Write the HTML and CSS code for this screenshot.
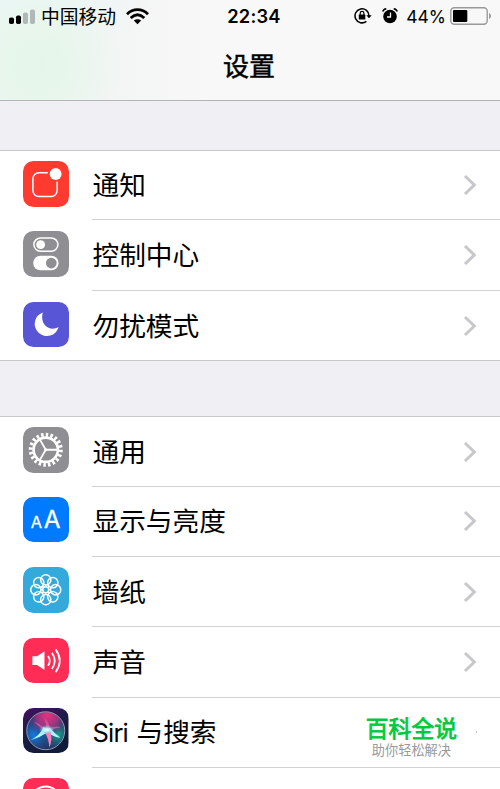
FILE: index.html
```html
<!DOCTYPE html>
<html lang="zh-CN">
<head>
<meta charset="utf-8">
<title>设置</title>
<link rel="stylesheet" href="styles.css">
</head>
<body>
<svg class="defs" width="0" height="0" aria-hidden="true">
  <symbol id="chevron" viewBox="0 0 14 22"><path d="M2 2l9.300 9-9.300 9" fill="none" stroke="#c7c7cc" stroke-width="3"/></symbol>
</svg>
<header class="top">
  <div class="status">
    <div class="carrier">
      <svg class="signal" width="27" height="17" viewBox="0 0 27 17"><rect x="0" y="10" width="5" height="6.500" rx="1.800"/><rect x="7" y="8" width="5" height="8.500" rx="1.800"/><g fill="#b0b9b7"><rect x="14" y="5" width="5" height="11.500" rx="1.800"/><rect x="21" y="2" width="5" height="14.500" rx="1.800"/></g></svg>
      <span>中国移动</span>
      <svg class="wifi" width="23" height="17" viewBox="0 0 23 17"><g fill="none" stroke="#000" stroke-width="2.800"><path d="M1 6.200C7 .2 16 .2 22 6.200"/><path d="M4.700 10C9 6 14 6 18.300 10"/></g><path d="M7.800 12.600Q11.500 9.800 15.200 12.600L11.500 16.300Z"/></svg>
    </div>
    <div class="clock">22:34</div>
    <div class="indicators">
      <svg class="lock" width="18" height="18" viewBox="0 0 18 18"><path d="M12.400 14.300A7 7 0 1 1 15 9" fill="none" stroke="#000" stroke-width="1.500"/><path d="M12.300 8.200h5.400L15 11.300z"/><rect x="4.800" y="7.600" width="6.500" height="5" rx=".6"/><path d="M6.200 8V6.200a1.850 1.850 0 0 1 3.700 0V8" fill="none" stroke="#000" stroke-width="1.200"/></svg>
      <svg class="alarm" width="16" height="18" viewBox="0 0 16 18"><circle cx="8" cy="9.500" r="6.800"/><path d="M.8 4.500Q1.500 2 4.300 1.700M15.200 4.500Q14.500 2 11.700 1.700" fill="none" stroke="#000" stroke-width="1.500"/><path d="M8.500 5.500v4.500H5" fill="none" stroke="#f7f7f7" stroke-width="1.300"/></svg>
      <span class="percent">44%</span>
      <svg class="battery" width="42" height="18" viewBox="0 0 42 18"><rect x=".8" y=".8" width="36.400" height="16.400" rx="3.500" fill="none" stroke="#999" stroke-width="1.400"/><rect x="3" y="3" width="14.300" height="12" rx="1"/><path d="M39 6q2 1 2 3t-2 3z" fill="#999"/></svg>
    </div>
  </div>
  <h1>设置</h1>
</header>
<main>
  <section class="group">
    <div class="row">
      <svg class="icon red" viewBox="0 0 46 46"><path d="M25 11.800H16a6 6 0 0 0-6 6v12a6 6 0 0 0 6 6h12.500a6 6 0 0 0 6-6V21" fill="none" stroke="#fff" stroke-width="1.500"/><circle cx="33" cy="13.200" r="6" fill="#fff"/></svg>
      <div class="cell"><span>通知</span><svg class="chevron"><use href="#chevron"/></svg></div>
    </div>
    <div class="row">
      <svg class="icon gray" viewBox="0 0 46 46"><rect x="11" y="7" width="24.300" height="13.500" rx="6.750" fill="none" stroke="#fff" stroke-width="1.500"/><circle cx="17.800" cy="13.800" r="4.500" fill="#fff"/><rect x="10.300" y="25" width="25.700" height="14.800" rx="7.400" fill="#fff"/><circle cx="28.600" cy="32.400" r="5.400" fill="#8e8e93"/></svg>
      <div class="cell"><span>控制中心</span><svg class="chevron"><use href="#chevron"/></svg></div>
    </div>
    <div class="row">
      <svg class="icon indigo" viewBox="0 0 46 46"><path d="M20 10.500A12.300 12.300 0 1 0 36 25.300C27.500 30.500 16.500 23 20 10.500Z" fill="#fff"/></svg>
      <div class="cell"><span>勿扰模式</span><svg class="chevron"><use href="#chevron"/></svg></div>
    </div>
  </section>
  <section class="group">
    <div class="row">
      <svg class="icon gray" viewBox="0 0 46 46"><g fill="none" stroke="#fff"><circle cx="23" cy="23" r="12.300" stroke-width="2.700"/><circle cx="23" cy="23" r="15.200" stroke-width="4" pathLength="40" stroke-dasharray="1.050 .95"/><path d="M23 23h12M23 23l-6.200-10.700M23 23l-6.200 10.700" stroke-width="1.800"/></g><circle cx="23" cy="23" r="1.600" fill="#fff"/></svg>
      <div class="cell"><span>通用</span><svg class="chevron"><use href="#chevron"/></svg></div>
    </div>
    <div class="row">
      <svg class="icon blue" viewBox="0 0 46 46"><g fill="#fff" stroke="#fff" stroke-width=".3" font-family="Inter, sans-serif"><text x="7.800" y="31" font-size="16.500">A</text><text x="20.900" y="31.700" font-size="24.500">A</text></g></svg>
      <div class="cell"><span>显示与亮度</span><svg class="chevron"><use href="#chevron"/></svg></div>
    </div>
    <div class="row">
      <svg class="icon cyan" viewBox="0 0 46 46"><g fill="none" stroke="#fff" stroke-width="1.500"><circle cx="23" cy="13" r="5.200"/><circle cx="30.100" cy="15.900" r="5.200"/><circle cx="33" cy="23" r="5.200"/><circle cx="30.100" cy="30.100" r="5.200"/><circle cx="23" cy="33" r="5.200"/><circle cx="15.900" cy="30.100" r="5.200"/><circle cx="13" cy="23" r="5.200"/><circle cx="15.900" cy="15.900" r="5.200"/><circle cx="23" cy="23" r="3"/><path d="M23 18v2M23 26v2M18 23h2M26 23h2M19.500 19.500l1.400 1.400M26.500 19.500l-1.400 1.400M19.500 26.500l1.400-1.400M26.500 26.500l-1.400-1.400"/></g></svg>
      <div class="cell"><span>墙纸</span><svg class="chevron"><use href="#chevron"/></svg></div>
    </div>
    <div class="row">
      <svg class="icon pink" viewBox="0 0 46 46"><path d="M9.500 18.500h4.700l7.500-5v18.800l-7.500-5H9.500z" fill="#fff"/><g fill="none" stroke="#fff" stroke-width="1.800"><path d="M25.300 18.200Q28.800 23 25.300 28"/><path d="M29.200 14.800Q35 23 29.200 31.300"/><path d="M33 11.500Q41.300 23 33 34.500"/></g></svg>
      <div class="cell"><span>声音</span><svg class="chevron"><use href="#chevron"/></svg></div>
    </div>
    <div class="row">
      <svg class="icon siri" viewBox="0 0 46 46">
        <defs>
          <linearGradient id="night" x2=".4" y2="1"><stop stop-color="#470f5e"/><stop offset=".5" stop-color="#1c1c48"/><stop offset="1" stop-color="#101b35"/></linearGradient>
          <radialGradient id="rose" cx=".55" cy=".1" r=".55"><stop stop-color="#e6317d"/><stop offset=".5" stop-color="#b33482" stop-opacity=".85"/><stop offset="1" stop-color="#703082" stop-opacity="0"/></radialGradient>
          <radialGradient id="azure" cx=".18" cy=".62" r=".5"><stop stop-color="#127de0"/><stop offset="1" stop-color="#1667ab" stop-opacity="0"/></radialGradient>
          <radialGradient id="teal" cx=".83" cy=".6" r=".45"><stop stop-color="#1c9c8b"/><stop offset="1" stop-color="#14737d" stop-opacity="0"/></radialGradient>
          <radialGradient id="glow"><stop stop-color="#fff"/><stop offset=".3" stop-color="#bff9ff" stop-opacity=".9"/><stop offset="1" stop-color="#4ddce8" stop-opacity="0"/></radialGradient>
        </defs>
        <rect width="46" height="46" fill="url(#night)"/>
        <circle cx="23" cy="23" r="19" fill="#293064"/><circle cx="23" cy="23" r="19" fill="url(#azure)"/><circle cx="23" cy="23" r="19" fill="url(#teal)"/><circle cx="23" cy="23" r="19" fill="url(#rose)"/>
        <circle cx="23" cy="23" r="19.200" fill="none" stroke="#929cb5" stroke-width="1"/>
        <path d="M22 21Q16 15 11 14Q17 20 22 23zM23 22Q24 12 20 9Q28 14 27 24zM26 21Q34 17 38 20Q31 20 26 24z" fill="#e55ba8" opacity=".7"/>
        <path d="M21 19Q17 28 7.500 32.500Q17 30 26 24zM23 23Q31 30 38 30Q32 26 27 20z" fill="#a9f7ff"/>
        <path d="M21.500 24Q26.500 31 26.500 40Q30.500 32 27.500 23z" fill="#ff79bb"/>
        <ellipse cx="24" cy="22" rx="8" ry="5" fill="url(#glow)"/>
      </svg>
      <div class="cell"><span class="mixed"><span class="latin">Siri</span> 与搜索</span><div class="brand"><strong>百科全说</strong><small>助你轻松解决</small></div><i class="speck"></i></div>
    </div>
    <div class="row">
      <svg class="icon pink" viewBox="0 0 46 46"><circle cx="23" cy="23" r="14.500" fill="none" stroke="#fff" stroke-width="2"/></svg>
      <div class="cell"></div>
    </div>
  </section>
</main>
</body>
</html>
```
FILE: styles.css
```css
* { box-sizing: border-box; }
html, body { height: 100%; overflow: hidden; }
body {
  display: flex;
  flex-direction: column;
  margin: 0;
  background: #efeff4;
  color: #000;
  font-family: Inter, "Noto Sans CJK SC", sans-serif;
}
.defs { position: absolute; }
svg { display: block; flex: none; }
.top {
  flex: none;
  height: 101px;
  border-bottom: 1px solid #b5b5b9;
  background:
    radial-gradient(ellipse 85px 95px at 38px 66px, #e5f6e9 0%, #e8f6ec 40%, transparent 100%),
    radial-gradient(ellipse 140px 60px at 10px 0, #e9f6f8, transparent),
    linear-gradient(90deg, #eff7f3, #f4f5f5 130px, #f8f8f8 220px);
}
main { flex: 1; min-height: 0; overflow: hidden; }
.status {
  display: grid;
  grid-template-columns: 1fr auto 1fr;
  align-items: center;
  height: 32px;
  padding: 0 9px;
}
.carrier, .indicators { display: flex; align-items: center; }
.carrier { font: 18.800px/32px "Noto Sans CJK SC", sans-serif; }
.signal { margin: 0 5px 0 0; transform: translateY(-.5px); }
.wifi { margin-left: 10px; }
.clock { font-size: 18.300px; font-weight: 600; letter-spacing: .2px; padding-left: 8px; }
.indicators { justify-content: flex-end; }
.alarm { margin-left: 10px; }
.percent { margin: 0 4px 0 8px; font-size: 17.500px; }
.battery { margin-right: -1px; }
h1 {
  margin: 11px 0 0;
  padding-right: 2px;
  text-align: center;
  font: 400 26px/44px "Noto Sans CJK SC", sans-serif;
  -webkit-text-stroke: .5px #000;
}
.group {
  margin-top: 49px;
  border-top: 1px solid #c8c7cc;
  border-bottom: 1px solid #c8c7cc;
  background: #fff;
}
.group + .group { margin-top: 55px; }
.row {
  display: flex;
  height: 70.300px;
  padding-left: 23.300px;
}
.row:first-child { height: 69.300px; }
.group:first-child .row:last-child { height: 69.900px; }
.icon {
  width: 45.500px;
  height: 45.500px;
  margin-top: 10.200px;
  border-radius: 10.500px;
}
.group:first-child .row + .row .icon { margin-top: 11px; }
.group + .group .row:first-child .icon { margin-top: 10px; }
.red { background: #ff3b30; }
.gray { background: #8e8e93; }
.indigo { background: #5856d6; }
.blue { background: #007aff; }
.cyan { background: #34aadc; }
.pink { background: #ff2d55; }
.cell {
  display: flex;
  flex: 1;
  align-items: center;
  justify-content: space-between;
  margin-left: 23.200px;
  padding-right: 23px;
  border-bottom: 1px solid #d2d2d5;
  font: 26.700px/40px "Noto Sans CJK SC", sans-serif;
}
.row:last-child .cell { border-bottom: 0; }
.cell > span { margin: -2px 0 0 .5px; }
.cell > .mixed { margin-top: -1.500px; white-space: nowrap; }
.latin { margin-right: 2.500px; font-family: Inter, sans-serif; font-size: 25.500px; letter-spacing: -.8px; }
.chevron { width: 14px; height: 22px; }
.brand {
  display: flex;
  flex-direction: column;
  align-items: center;
  margin: 12px 0 0 auto;
}
.brand strong {
  color: #00c93c;
  font-size: 22.800px;
  line-height: 24px;
  font-weight: 400;
  -webkit-text-stroke: .8px #00c93c;
}
.brand small { color: #999; font-size: 13.200px; line-height: 20px; }
.speck { width: 1px; height: 2px; margin-left: 19px; background: #bbb; }
```
